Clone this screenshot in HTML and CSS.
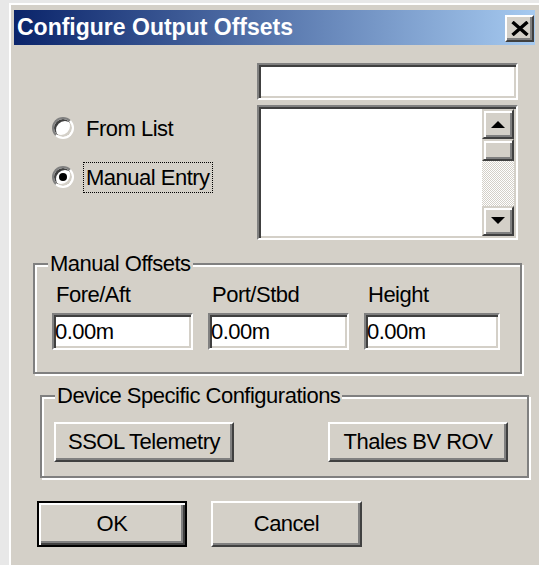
FILE: index.html
```html
<!DOCTYPE html>
<html lang="en">
<head>
<meta charset="utf-8">
<title>Configure Output Offsets</title>
<link rel="stylesheet" href="styles.css">
</head>
<body>
<div class="window">
  <div class="titlebar">
    <span class="title">Configure Output Offsets</span>
    <button class="close" aria-label="Close">
      <svg width="18" height="15" viewBox="0 0 18 15"><path d="M1.5 1 L16.5 14 M16.5 1 L1.5 14" stroke="#000" stroke-width="3.4" fill="none"/></svg>
    </button>
  </div>

  <div class="top">
    <div class="choices">
      <div class="choice">
        <span class="radio"></span>
        <span class="choice-label">From List</span>
      </div>
      <div class="choice">
        <span class="radio on"></span>
        <span class="choice-label focus">Manual Entry</span>
      </div>
    </div>
    <div class="pick">
      <div class="field sunken"></div>
      <div class="list sunken">
        <div class="scrollbar">
          <div class="sb-btn">
            <svg width="16" height="8" viewBox="0 0 16 8"><polygon points="1,8 8,1 15,8" fill="#000"/></svg>
          </div>
          <div class="sb-thumb"></div>
          <div class="sb-track"></div>
          <div class="sb-btn">
            <svg width="16" height="8" viewBox="0 0 16 8"><polygon points="1,0 8,7 15,0" fill="#000"/></svg>
          </div>
        </div>
      </div>
    </div>
  </div>

  <div class="group manual">
    <span class="legend">Manual Offsets</span>
    <div class="offsets">
      <span class="off-label">Fore/Aft</span>
      <span class="off-label">Port/Stbd</span>
      <span class="off-label">Height</span>
      <input class="off-input sunken" type="text" value="0.00m">
      <input class="off-input sunken" type="text" value="0.00m">
      <input class="off-input sunken" type="text" value="0.00m">
    </div>
  </div>

  <div class="group device">
    <span class="legend">Device Specific Configurations</span>
    <button class="btn raised wide">SSOL Telemetry</button>
    <button class="btn raised wide">Thales BV ROV</button>
  </div>

  <div class="footer">
    <button class="btn default ok">OK</button>
    <button class="btn raised cancel">Cancel</button>
  </div>
</div>
</body>
</html>
```

FILE: styles.css
```css
html, body {
  margin: 0;
  padding: 0;
  overflow: hidden;
  background: #e8e8e8;
}

body {
  font-family: "Liberation Sans", Arial, sans-serif;
  font-size: 22px;
  letter-spacing: -0.5px;
  color: #000;
}

/* dialog frame */
.window {
  width: 533px;
  height: 580px;
  margin: 3px 0 0 9px;
  box-sizing: border-box;
  background: #d4d0c8;
  border-top: 2px solid #fff;
  border-left: 2px solid #fff;
  border-right: 2px solid #404040;
  padding: 5px 5px 0 3px;
}

.titlebar {
  height: 35px;
  display: flex;
  align-items: flex-start;
  padding-left: 3px;
  background: linear-gradient(to right, #0a246a, #a6caf0);
}

.title {
  flex: 1;
  color: #fff;
  font-weight: bold;
  font-size: 23px;
  letter-spacing: 0;
  line-height: 35px;
  white-space: nowrap;
}

.close {
  width: 29px;
  height: 27px;
  margin: 5px 1px 0 0;
  padding: 0;
  box-sizing: border-box;
  background: #d4d0c8;
  border: 2px solid;
  border-color: #fff #404040 #404040 #fff;
  box-shadow: inset -2px -2px 0 #808080;
  display: grid;
  place-items: center;
}

.close svg { display: block; }

/* shared 3D edges */
.sunken {
  box-sizing: border-box;
  background: #fff;
  border: 2px solid;
  border-color: #808080 #fff #fff #808080;
  box-shadow: inset 2px 2px 0 #404040, inset -2px -2px 0 #d4d0c8;
}

.raised {
  box-sizing: border-box;
  background: #d4d0c8;
  border: 2px solid;
  border-color: #fff #404040 #404040 #fff;
  box-shadow: inset -2px -2px 0 #808080;
}

/* radio choices + list picker */
.top {
  display: flex;
  margin-top: 18px;
}

.choices {
  width: 243px;
  box-sizing: border-box;
  padding: 48px 0 0 38px;
  display: flex;
  flex-direction: column;
  gap: 15px;
}

.choice {
  height: 34px;
  display: flex;
  align-items: center;
}

.radio {
  flex: none;
  width: 22px;
  height: 22px;
  box-sizing: border-box;
  margin-right: 9px;
  border-radius: 50%;
  border: 2px solid;
  border-color: #808080 #fff #fff #808080;
  background: #fff;
  box-shadow: inset 2px 2px 0 #404040, inset -2px -2px 0 #d4d0c8;
  display: grid;
  place-items: center;
}

.radio.on::after {
  content: "";
  width: 8px;
  height: 8px;
  border-radius: 50%;
  background: #000;
}

.choice-label {
  border: 1px dotted transparent;
  padding: 2px 2px;
  line-height: 25px;
  white-space: nowrap;
}

.choice-label.focus {
  border-color: #000;
}

.pick {
  width: 261px;
  display: flex;
  flex-direction: column;
  gap: 5px;
}

.field {
  height: 37px;
}

.list {
  height: 135px;
  padding: 2px;
  display: flex;
  justify-content: flex-end;
}

.scrollbar {
  width: 32px;
  display: flex;
  flex-direction: column;
}

.sb-btn,
.sb-thumb {
  box-sizing: border-box;
  background: #d4d0c8;
  border: 2px solid;
  border-color: #d4d0c8 #404040 #404040 #d4d0c8;
  box-shadow: inset 2px 2px 0 #fff, inset -2px -2px 0 #808080;
}

.sb-btn {
  height: 30px;
  display: grid;
  place-items: center;
}

.sb-btn svg { display: block; }

.sb-thumb {
  height: 22px;
}

.sb-track {
  flex: 1;
  background-color: #fff;
  background-image: conic-gradient(#d4d0c8 25%, #fff 0 50%, #d4d0c8 0 75%, #fff 0);
  background-size: 2px 2px;
}

/* etched group boxes */
.group {
  position: relative;
  width: 489px;
  box-sizing: border-box;
  border: 2px solid #808080;
  box-shadow: inset 2px 2px 0 #fff, 2px 2px 0 #fff;
}

.legend {
  position: absolute;
  top: -14px;
  left: 13px;
  padding: 0 2px;
  line-height: 26px;
  background: #d4d0c8;
  white-space: nowrap;
}

.manual {
  margin: 23px 0 0 19px;
  padding: 17px 0 22px 17px;
}

.offsets {
  display: grid;
  grid-template-columns: 141px 141px 136px;
  column-gap: 15px;
  row-gap: 5px;
}

.off-label {
  padding-left: 4px;
  line-height: 26px;
}

.off-input {
  width: 100%;
  height: 37px;
  margin: 0;
  padding: 0 1px;
  font: inherit;
  letter-spacing: inherit;
  color: #000;
  outline: none;
}

.device {
  margin: 21px 0 0 26px;
  padding: 25px 19px 14px 12px;
  display: flex;
  justify-content: space-between;
}

/* push buttons */
.btn {
  margin: 0;
  padding: 0;
  font: inherit;
  letter-spacing: inherit;
  color: #000;
  background: #d4d0c8;
  white-space: nowrap;
}

.wide {
  width: 180px;
  height: 40px;
}

.footer {
  margin-top: 23px;
  padding-left: 23px;
  display: flex;
  gap: 24px;
}

.ok,
.cancel {
  height: 46px;
}

.ok { width: 150px; }
.cancel { width: 151px; }

.default {
  box-sizing: border-box;
  border: 2px solid #000;
  box-shadow: inset 2px 2px 0 #fff, inset -2px -2px 0 #404040, inset -4px -4px 0 #808080;
}
```
